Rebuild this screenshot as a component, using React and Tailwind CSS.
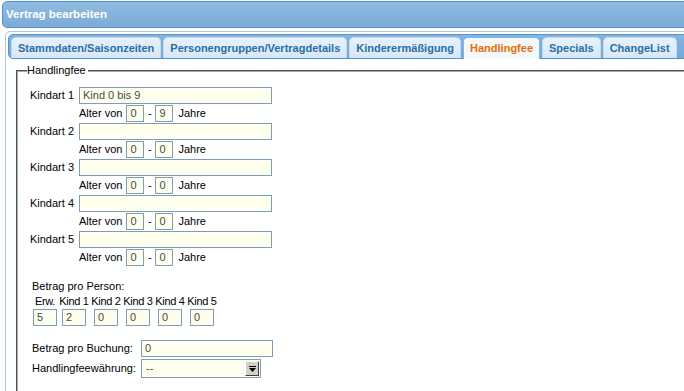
import React from "react";

const tabs = [
  { label: "Stammdaten/Saisonzeiten" },
  { label: "Personengruppen/Vertragdetails" },
  { label: "Kinderermäßigung" },
  { label: "Handlingfee", active: true },
  { label: "Specials" },
  { label: "ChangeList" },
];

const kinder = [
  { name: "Kind 0 bis 9", von: "0", bis: "9" },
  { name: "", von: "0", bis: "0" },
  { name: "", von: "0", bis: "0" },
  { name: "", von: "0", bis: "0" },
  { name: "", von: "0", bis: "0" },
];

const betrag = [
  { head: "Erw.", value: "5", w: "w-[26px]" },
  { head: "Kind 1", value: "2", w: "w-[32px]" },
  { head: "Kind 2", value: "0", w: "w-[32px]" },
  { head: "Kind 3", value: "0", w: "w-[32px]" },
  { head: "Kind 4", value: "0", w: "w-[32px]" },
  { head: "Kind 5", value: "0", w: "w-[32px]" },
];

function Field({ value, className }) {
  return (
    <div
      className={
        "h-[17px] border border-[#7f9db9] bg-[#ffffee] px-[3px] leading-[15px] text-[#4a4a4a] " +
        className
      }
    >
      {value}
    </div>
  );
}

export default function App() {
  return (
    <div className="w-[684px] h-[391px] overflow-hidden bg-white font-['Liberation_Sans',Arial,sans-serif] text-[11px] text-black">
      <div className="ml-[2px] mt-[1px] w-[720px] h-[27px] border border-[#4f94d4] rounded-[5px] bg-gradient-to-b from-[#8fbbe1] to-[#7dabd6] flex items-center px-[3px] text-white font-bold text-[11.5px]">
        Vertrag bearbeiten
      </div>

      <div className="ml-[5px] mt-[3px] w-[720px] h-[400px] border border-[#a6c9e2] rounded-[5px] p-[2px] bg-white">
        <div className="flex items-end h-[25px] border border-[#4f94d4] rounded-[5px] bg-gradient-to-b from-[#86b5de] to-[#76a8d6] pl-[2px]">
          {tabs.map(t => (
            <div
              key={t.label}
              className={
                t.active
                  ? "h-[22px] mb-[-1px] mr-[2px] px-[6px] border border-b-0 border-[#79b7e7] rounded-t-[5px] bg-[#f5f8f9] text-[#e17009] font-bold leading-[20px]"
                  : "h-[21px] mr-[2px] px-[6px] border border-b-0 border-[#c5dbec] rounded-t-[5px] bg-gradient-to-b from-[#e6f2fc] to-[#d5e8f8] text-[#2e6e9e] font-bold leading-[20px]"
              }
            >
              {t.label}
            </div>
          ))}
        </div>

        {/* fieldset: legend row + box */}
        <div className="ml-[8px] mt-[5px]">
          <div className="flex h-[13px]">
            <div className="w-[11px] shrink-0 mt-[6px] border-l-2 border-t-2 [border-style:groove] border-[#a8a8a8]" />
            <span className="shrink-0 leading-[13px]">Handlingfee</span>
            <div className="flex-1 ml-[2px] mt-[6px] border-t-2 border-r-2 [border-style:groove] border-[#a8a8a8]" />
          </div>
          <div className="h-[340px] border-2 border-t-0 [border-style:groove] border-[#a8a8a8] pt-[10px]">
            {kinder.map((k, i) => (
              <div key={i}>
                <div className="flex items-start h-[18px]">
                  <div className="w-[61px] pr-[5px] text-right leading-[17px]">Kindart {i + 1}</div>
                  <Field value={k.name} className="w-[193px]" />
                </div>
                <div className="flex items-start h-[18px] pl-[61px] leading-[17px]">
                  <span>Alter von</span>
                  <Field value={k.von} className="w-[18px] ml-[4px]" />
                  <span className="w-[11px] text-center">-</span>
                  <Field value={k.bis} className="w-[18px]" />
                  <span className="ml-[5px]">Jahre</span>
                </div>
              </div>
            ))}

            <div className="pl-[14px]">
              <div className="mt-[13px] leading-[13px]">Betrag pro Person:</div>
              <div className="flex mt-[2px] leading-[13px] tracking-[-0.3px]">
                {betrag.map(b => (
                  <div key={b.head} className={b.w + " text-center"}>{b.head}</div>
                ))}
              </div>
              <div className="flex mt-[1px]">
                {betrag.map(b => (
                  <div key={b.head} className={b.w + " flex justify-center"}>
                    <Field value={b.value} className="w-[24px]" />
                  </div>
                ))}
              </div>

              <div className="flex items-start mt-[14px]">
                <div className="w-[109px] leading-[17px]">Betrag pro Buchung:</div>
                <Field value="0" className="w-[132px]" />
              </div>
              <div className="flex items-center mt-[2px]">
                <div className="w-[109px]">Handlingfeewährung:</div>
                <div className="w-[120px] h-[19px] border border-[#7f9db9] bg-[#ffffee] flex items-center justify-between pl-[4px] pr-[1px] text-[#4a4a4a]">
                  <span>--</span>
                  <div className="w-[14px] h-[15px] bg-[#d4d0c8] border-t border-l border-t-white border-l-white border-b border-r border-b-[#404040] border-r-[#404040] flex items-center justify-center">
                    <svg width="7" height="6" viewBox="0 0 7 6">
                      <rect x="0" y="0" width="7" height="1" fill="#000" />
                      <polygon points="0,2 7,2 3.5,6" fill="#000" />
                    </svg>
                  </div>
                </div>
              </div>
            </div>
          </div>
        </div>
      </div>
    </div>
  );
}
